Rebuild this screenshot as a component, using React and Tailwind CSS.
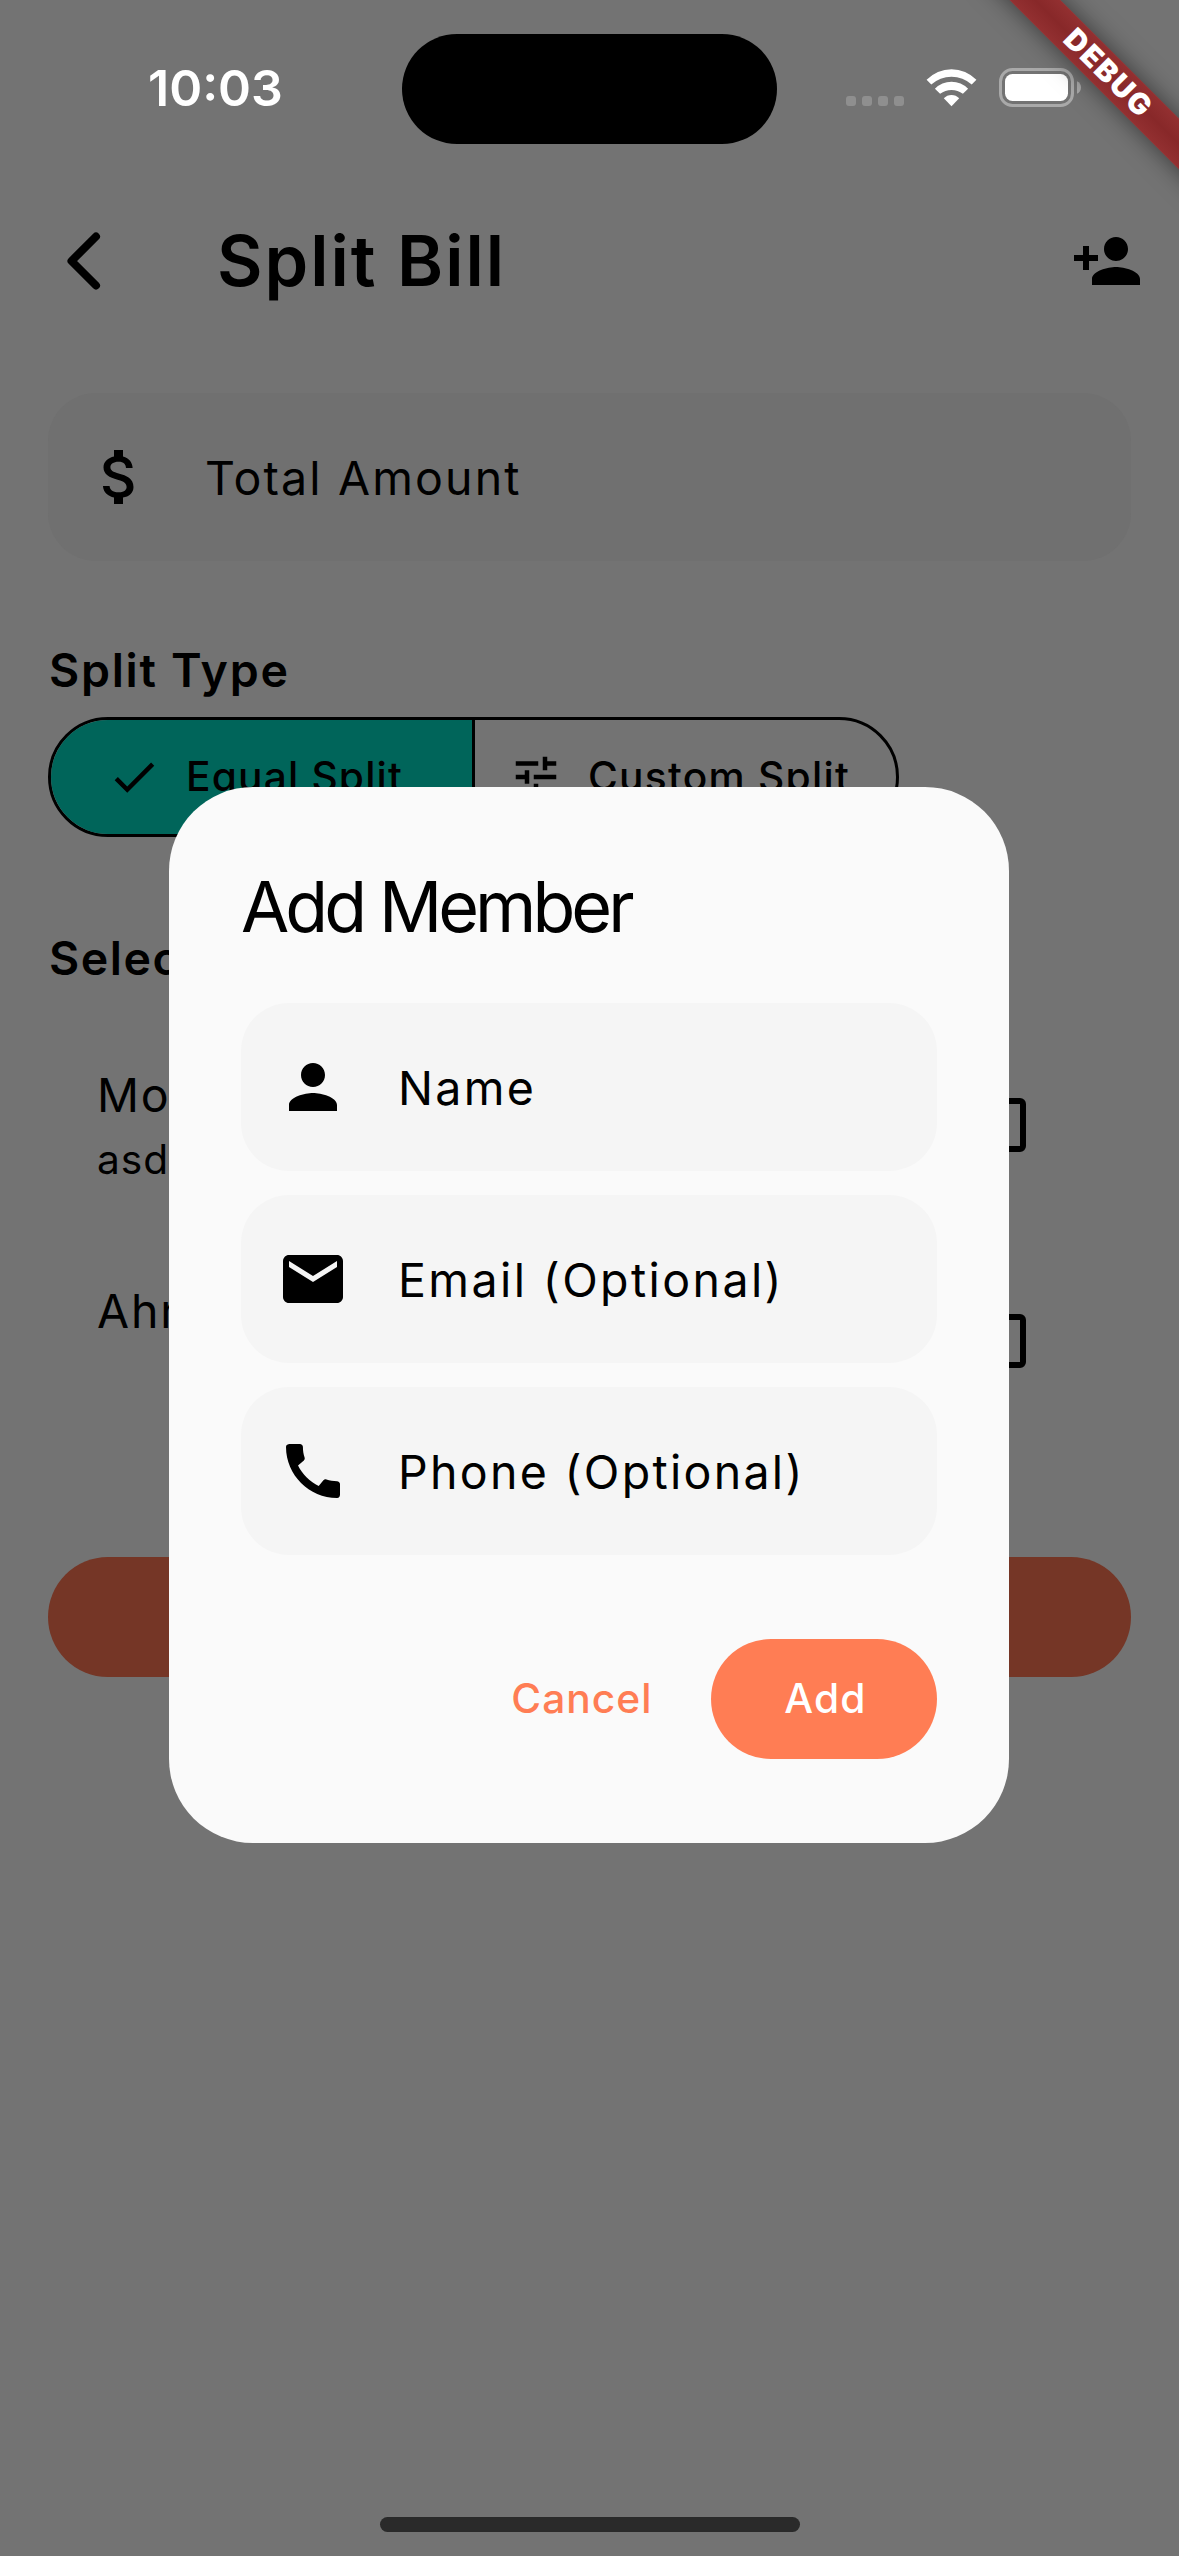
import React from "react";

const PATHS = {
  dollar:
    "M11.8 10.9c-2.27-.59-3-1.2-3-2.15 0-1.09 1.01-1.85 2.7-1.85 1.78 0 2.44.85 2.5 2.1h2.21c-.07-1.72-1.12-3.3-3.21-3.81V3h-3v2.16c-1.94.42-3.5 1.68-3.5 3.61 0 2.31 1.91 3.46 4.7 4.13 2.5.6 3 1.48 3 2.41 0 .69-.49 1.79-2.7 1.79-2.06 0-2.87-.92-2.98-2.1h-2.2c.12 2.19 1.76 3.42 3.68 3.83V21h3v-2.15c1.95-.37 3.5-1.5 3.5-3.55 0-2.84-2.43-3.81-4.7-4.4z",
  person:
    "M12 12c2.21 0 4-1.79 4-4s-1.79-4-4-4-4 1.79-4 4 1.79 4 4 4zm0 2c-2.67 0-8 1.34-8 4v2h16v-2c0-2.66-5.33-4-8-4z",
  personAdd:
    "M15 12c2.21 0 4-1.79 4-4s-1.79-4-4-4-4 1.79-4 4 1.79 4 4 4zm-9-2V7H4v3H1v2h3v3h2v-3h3v-2H6zm9 4c-2.67 0-8 1.34-8 4v2h16v-2c0-2.66-5.33-4-8-4z",
  email:
    "M20 4H4c-1.1 0-1.99.9-1.99 2L2 18c0 1.1.9 2 2 2h16c1.1 0 2-.9 2-2V6c0-1.1-.9-2-2-2zm0 4l-8 5-8-5V6l8 5 8-5v2z",
  phone:
    "M20.01 15.38c-1.23 0-2.42-.2-3.53-.56-.35-.12-.74-.03-1.01.24l-1.57 1.97c-2.83-1.35-5.48-3.9-6.89-6.83l1.95-1.66c.27-.28.35-.67.24-1.02-.37-1.11-.56-2.3-.56-3.53 0-.54-.45-.99-.99-.99H4.19C3.65 3 3 3.24 3 3.99 3 13.28 10.73 21 20.01 21c.71 0 .99-.63.99-1.18v-3.45c0-.54-.45-.99-.99-.99z",
  check: "M9 16.17L4.83 12l-1.42 1.41L9 19 21 7l-1.41-1.41z",
  tune: "M3 17v2h6v-2H3zM3 5v2h10V5H3zm10 16v-2h8v-2h-8v-2h-2v6h2zM7 9v2H3v2h4v2h2V9H7zm14 4v-2H11v2h10zm-6-4h2V7h4V5h-4V3h-2v6z",
};

function Icon({ name, className }) {
  return (
    <svg viewBox="0 0 24 24" fill="currentColor" className={`shrink-0 ${className}`}>
      <path d={PATHS[name]} />
    </svg>
  );
}

function Field({ icon, label, className, spacing }) {
  return (
    <div className={`flex h-[168px] shrink-0 items-center gap-[49px] rounded-[48px] pl-9 ${className}`}>
      <Icon name={icon} className="size-[72px]" />
      <span className={`pt-[2px] text-[46.5px] leading-[60px] ${spacing}`}>{label}</span>
    </div>
  );
}

function StatusBar() {
  return (
    <div className="flex h-[177px] items-start text-white">
      <div className="mt-[58px] ml-[148px] w-[254px] text-[50px] leading-[60px] font-semibold">10:03</div>
      <div className="mt-[34px] h-[110px] w-[375px] rounded-full bg-black" />
      <div className="mt-[96px] ml-[69px] flex gap-[6px]">
        {[0, 1, 2, 3].map((dot) => (
          <div key={dot} className="size-[10px] rounded-[3px] bg-[#8f8f8f]" />
        ))}
      </div>
      <svg width="52" height="38" viewBox="0 0 52 38" fill="currentColor" className="mt-[69px] ml-[22px]">
        <path d="M.6 10.8A34.5 34.5 0 0 1 50.4 10.8L45.7 15.6A29.8 29.8 0 0 0 5.3 15.6Z" />
        <path d="M8.9 19.8A23 23 0 0 1 42.1 19.8L36.9 24.8A18.7 18.7 0 0 0 14.1 24.8Z" />
        <path d="M17.8 29.3A10.5 10.5 0 0 1 33.2 29.3L25.5 37.2Z" />
      </svg>
      <svg width="86" height="42" viewBox="0 0 86 42" className="mt-[67px] ml-[20px]">
        <rect x="2.5" y="2.5" width="72" height="36" rx="12" fill="none" stroke="#a9a9a9" strokeWidth="3" />
        <rect x="7" y="7" width="63" height="27" rx="7.5" fill="#fff" />
        <path d="M79 14.3c2.6 1 4 3.300 4 6.200s-1.400 5.200-4 6.200z" fill="#a9a9a9" />
      </svg>
    </div>
  );
}

function AppBar() {
  return (
    <div className="flex h-[168px] items-center pr-9">
      <svg
        width="50"
        height="66"
        viewBox="0 0 50 66"
        fill="none"
        stroke="currentColor"
        strokeWidth="8"
        strokeLinecap="round"
        strokeLinejoin="round"
        className="ml-[59px]"
      >
        <path d="M37 8.500L12.500 33 37 57.500" />
      </svg>
      <h1 className="ml-[108px] flex-1 text-[70px] leading-[84px] font-semibold tracking-[1.98px]">Split Bill</h1>
      <Icon name="personAdd" className="size-[72px]" />
    </div>
  );
}

function MemberTile({ name, detail }) {
  return (
    <div className="flex h-[216px] items-center justify-between pr-[105px] pl-[49px]">
      <div className="h-[132px]">
        <div className="text-[46.5px] leading-[72px] tracking-[1.8px]">{name}</div>
        <div className="text-[40.7px] leading-[58px] tracking-[1px]">{detail}</div>
      </div>
      <div className="size-[54px] rounded-[6px] border-[6px] border-black" />
    </div>
  );
}

function AddMemberDialog() {
  return (
    <div className="absolute inset-0 flex items-start justify-center pt-[787px] pr-px">
      <div className="flex h-[1056px] w-[840px] flex-col rounded-[84px] bg-[#fafafa] px-[72px] pt-[72px]">
        <h2 className="text-[70px] leading-[96px] tracking-[-3.95px] whitespace-nowrap">Add Member</h2>
        <div className="mt-12 flex flex-col gap-6">
          <Field icon="person" label="Name" className="bg-[#f5f5f5]" spacing="tracking-[2.3px]" />
          <Field icon="email" label="Email (Optional)" className="bg-[#f5f5f5]" spacing="tracking-[2.4px]" />
          <Field icon="phone" label="Phone (Optional)" className="bg-[#f5f5f5]" spacing="tracking-[2.3px]" />
        </div>
        <div className="mt-[84px] flex justify-end gap-6 text-[40.7px] font-medium">
          <button className="h-[120px] w-[212px] rounded-full pl-9 text-left tracking-[1.04px] text-[#ff7d54]">
            Cancel
          </button>
          <button className="h-[120px] w-[225.75px] rounded-full bg-[#ff7d54] pl-[73px] text-left tracking-[1.16px] text-white">
            Add
          </button>
        </div>
      </div>
    </div>
  );
}

function DebugRibbon() {
  return (
    <div className="pointer-events-none absolute top-0 right-0 size-[240px] overflow-hidden">
      <div className="absolute top-[54px] left-[-32px] flex h-[36px] w-[400px] rotate-45 items-center justify-center bg-linear-to-b from-[#933031] via-[#882829] to-[#933031] pb-[2px] pl-[4px] text-[29.5px] leading-[34px] font-black tracking-[1.8px] text-white shadow-[0_0_24px_rgba(0,0,0,0.5)]">
        DEBUG
      </div>
    </div>
  );
}

export default function App() {
  return (
    <div className="relative flex h-[2556px] w-[1179px] flex-col overflow-hidden bg-[#737373] font-[Inter,sans-serif] text-black">
      <StatusBar />
      <AppBar />
      <main className="flex flex-1 flex-col px-12 pt-12">
        <Field icon="dollar" label="Total Amount" className="bg-[#707070]" spacing="tracking-[2.13px]" />
        <h3 className="mt-[79px] pl-px text-[46.5px] leading-[60px] font-semibold tracking-[1.72px]">Split Type</h3>
        <div className="mt-[17px] flex h-[120px] w-[851px] overflow-hidden rounded-full border-[3px] border-black text-[40.7px] font-medium">
          <div className="flex w-[424px] items-center gap-[25px] border-r-[3px] border-black bg-[#00655a] pl-[56px] tracking-[1.17px]">
            <Icon name="check" className="size-[54px]" />
            Equal Split
          </div>
          <div className="flex flex-1 items-center gap-[25px] pl-[34px] tracking-[1.26px] whitespace-nowrap">
            <Icon name="tune" className="size-[54px]" />
            Custom Split
          </div>
        </div>
        <h3 className="mt-[91px] mb-[29px] pl-px text-[46.5px] leading-[60px] font-semibold tracking-[1.5px]">
          Select
        </h3>
        <MemberTile name="Mohamed" detail="asd" />
        <MemberTile name="Ahmed" detail="" />
        <div className="mt-[108px] h-[120px] rounded-full bg-[#753626]" />
      </main>
      <div className="mb-6 flex justify-center">
        <div className="h-[15px] w-[420px] rounded-full bg-[#2a2a2a]" />
      </div>
      <AddMemberDialog />
      <DebugRibbon />
    </div>
  );
}
